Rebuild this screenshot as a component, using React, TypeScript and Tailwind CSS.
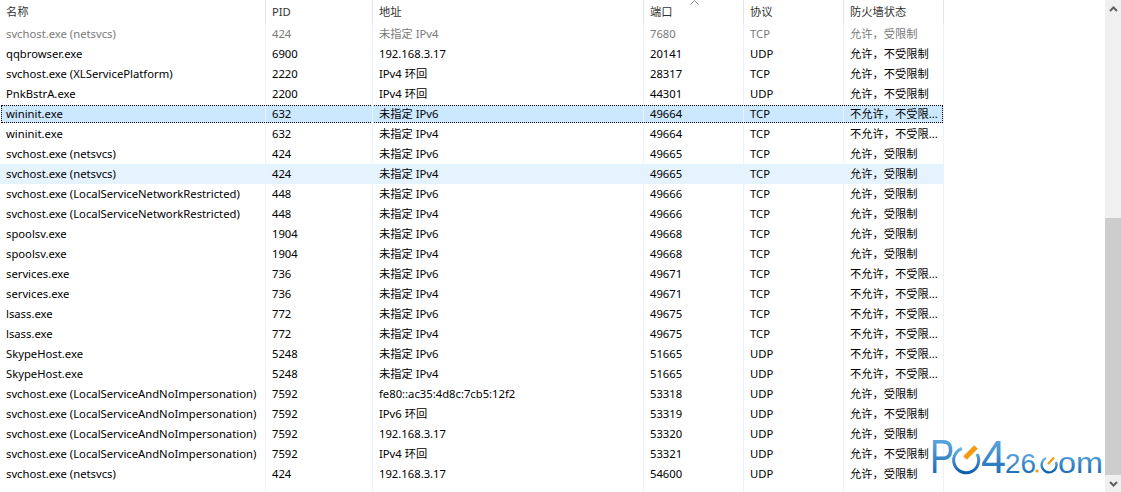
const font = "[font-family:'Noto_Sans','Noto_Sans_CJK_SC',sans-serif]";

const rows = [
  ["svchost.exe (netsvcs)", "424", "未指定 IPv4", "7680", "TCP", "允许，受限制"],
  ["qqbrowser.exe", "6900", "192.168.3.17", "20141", "UDP", "允许，不受限制"],
  ["svchost.exe (XLServicePlatform)", "2220", "IPv4 环回", "28317", "TCP", "允许，不受限制"],
  ["PnkBstrA.exe", "2200", "IPv4 环回", "44301", "UDP", "允许，不受限制"],
  ["wininit.exe", "632", "未指定 IPv6", "49664", "TCP", "不允许，不受限..."],
  ["wininit.exe", "632", "未指定 IPv4", "49664", "TCP", "不允许，不受限..."],
  ["svchost.exe (netsvcs)", "424", "未指定 IPv6", "49665", "TCP", "允许，受限制"],
  ["svchost.exe (netsvcs)", "424", "未指定 IPv4", "49665", "TCP", "允许，受限制"],
  ["svchost.exe (LocalServiceNetworkRestricted)", "448", "未指定 IPv6", "49666", "TCP", "允许，受限制"],
  ["svchost.exe (LocalServiceNetworkRestricted)", "448", "未指定 IPv4", "49666", "TCP", "允许，受限制"],
  ["spoolsv.exe", "1904", "未指定 IPv6", "49668", "TCP", "允许，受限制"],
  ["spoolsv.exe", "1904", "未指定 IPv4", "49668", "TCP", "允许，受限制"],
  ["services.exe", "736", "未指定 IPv6", "49671", "TCP", "不允许，不受限..."],
  ["services.exe", "736", "未指定 IPv4", "49671", "TCP", "不允许，不受限..."],
  ["lsass.exe", "772", "未指定 IPv6", "49675", "TCP", "不允许，不受限..."],
  ["lsass.exe", "772", "未指定 IPv4", "49675", "TCP", "不允许，不受限..."],
  ["SkypeHost.exe", "5248", "未指定 IPv6", "51665", "UDP", "不允许，不受限..."],
  ["SkypeHost.exe", "5248", "未指定 IPv4", "51665", "UDP", "不允许，不受限..."],
  ["svchost.exe (LocalServiceAndNoImpersonation)", "7592", "fe80::ac35:4d8c:7cb5:12f2", "53318", "UDP", "允许，受限制"],
  ["svchost.exe (LocalServiceAndNoImpersonation)", "7592", "IPv6 环回", "53319", "UDP", "允许，不受限制"],
  ["svchost.exe (LocalServiceAndNoImpersonation)", "7592", "192.168.3.17", "53320", "UDP", "允许，受限制"],
  ["svchost.exe (LocalServiceAndNoImpersonation)", "7592", "IPv4 环回", "53321", "UDP", "允许，不受限制"],
  ["svchost.exe (netsvcs)", "424", "192.168.3.17", "54600", "UDP", "允许，受限制"],
];

const headers = ["名称", "PID", "地址", "端口", "协议", "防火墙状态"];
const widths = ["w-[266px]", "w-[107px]", "w-[271px]", "w-[100px]", "w-[100px]", "w-[100px]"];

const Logo = () => (
  <svg className="absolute left-[930px] top-[416px]" width="176" height="76" viewBox="0 -20 176 76">
    <defs>
      <linearGradient id="logoBlue" x1="0" y1="0" x2="0" y2="1">
        <stop offset="0" stopColor="#6fb4e6" />
        <stop offset="1" stopColor="#0a5fae" />
      </linearGradient>
    </defs>
    <g fill="url(#logoBlue)" fontFamily="'Liberation Sans', sans-serif">
      <text x="0" y="37" fontSize="48" textLength="24" lengthAdjust="spacingAndGlyphs">P</text>
      <text x="51" y="37" fontSize="46" textLength="25" lengthAdjust="spacingAndGlyphs">4</text>
      <text x="75" y="37" fontSize="28" textLength="31" lengthAdjust="spacingAndGlyphs">26</text>
      <text x="128" y="37" fontSize="29" textLength="45" lengthAdjust="spacingAndGlyphs">om</text>
    </g>
    <path d="M32 12.5 A12.5 12.5 0 1 0 47 18" fill="none" stroke="url(#logoBlue)" strokeWidth="3" />
    <path d="M35 22 L46 11" stroke="#f39a12" strokeWidth="5" />
    <circle cx="107" cy="35" r="1.6" fill="#f39a12" />
    <path d="M116 22 A7.5 7.5 0 1 0 126 26" fill="none" stroke="url(#logoBlue)" strokeWidth="2.4" />
    <path d="M118 28 L124 21.5" stroke="#f39a12" strokeWidth="2.2" />
  </svg>
);

const App = () => {
  return (
    <div className={`relative flex h-[492px] w-[1121px] overflow-hidden bg-white text-[11.25px] leading-[20px] text-black ${font}`}>
      <div className="flex w-[1105px] flex-col">
        <div className="relative flex h-6 shrink-0 text-[#333]">
          {headers.map((h, i) => (
            <div key={h} className={`${widths[i]} truncate border-r border-[#e5e5e5] pl-[6px] leading-[24px]`}>
              {h}
            </div>
          ))}
          <svg className="absolute left-[690px] top-0" width="9" height="5" viewBox="0 0 9 5">
            <path d="M0.5 4.5 L4.5 0.5 L8.5 4.5" fill="none" stroke="#8a8a8a" />
          </svg>
        </div>
        {rows.map((row, r) => (
          <div
            key={r}
            className={`relative flex h-5 w-[944px] shrink-0 ${r === 7 ? "bg-[#e5f3ff]" : ""} ${r === 0 ? "text-[#7a7a7a]" : ""}`}
          >
            {r === 4 && (
              <div className="absolute inset-x-[1px] inset-y-[1px] border border-dotted border-black bg-[#cce8ff]" />
            )}
            {row.map((c, i) => (
              <div key={i} className={`${widths[i]} relative truncate border-r border-[#eaf2fb] pl-[6px]`}>
                {c}
              </div>
            ))}
          </div>
        ))}
        <div className="flex h-2 shrink-0">
          {widths.map((w, i) => (
            <div key={i} className={`${w} border-r border-[#eaf2fb]`} />
          ))}
        </div>
      </div>
      <div className="flex w-4 flex-col bg-[#f0f0f0]">
        <div className="flex h-[17px] items-center justify-center">
          <svg width="9" height="6" viewBox="0 0 9 6">
            <path d="M1 5 L4.5 1.5 L8 5" fill="none" stroke="#606060" strokeWidth="2" />
          </svg>
        </div>
        <div className="mt-[201px] h-[257px] bg-[#cdcdcd]" />
        <div className="flex h-[17px] items-center justify-center">
          <svg width="9" height="6" viewBox="0 0 9 6">
            <path d="M1 1 L4.5 4.5 L8 1" fill="none" stroke="#606060" strokeWidth="2" />
          </svg>
        </div>
      </div>
      <Logo />
    </div>
  );
};

export default App;
